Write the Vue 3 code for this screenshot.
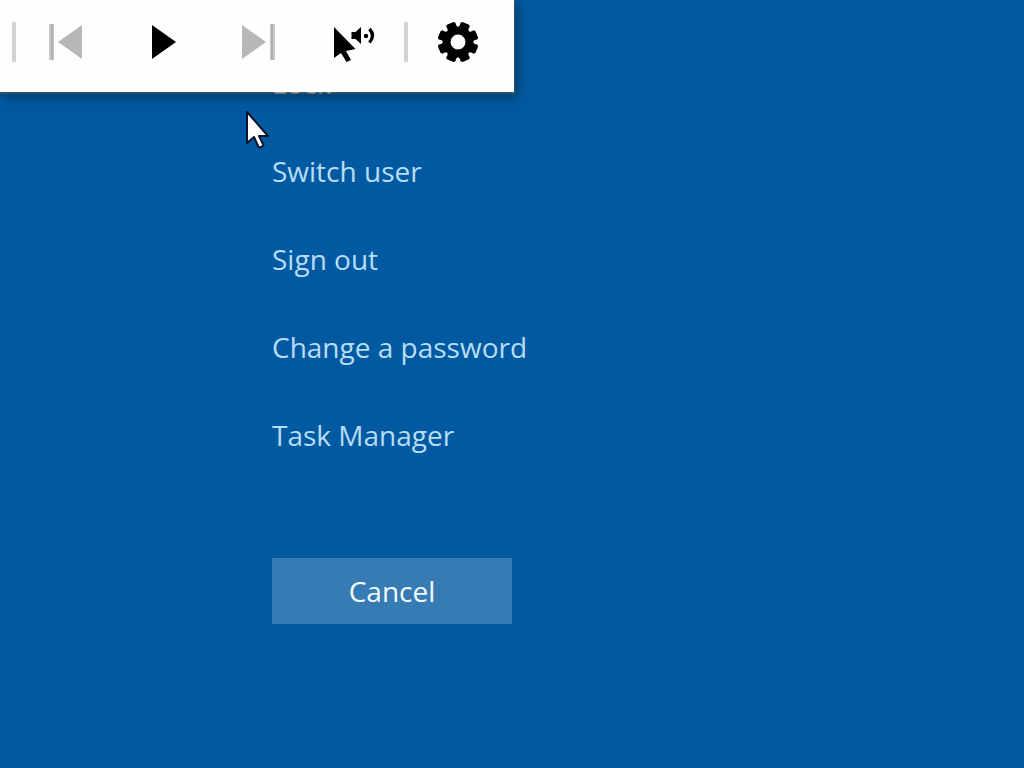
<script setup>
const options = ['Lock', 'Switch user', 'Sign out', 'Change a password', 'Task Manager']

const point = (radius, degrees) => {
  const a = (degrees * Math.PI) / 180
  return `${(458 + radius * Math.cos(a)).toFixed(2)} ${(42 + radius * Math.sin(a)).toFixed(2)}`
}
const corners = []
for (let i = 0; i < 8; i++) {
  const c = 22.5 + i * 45
  for (const [radius, offset] of [[15.5, -19], [17, -16], [19.5, -15], [20.6, -10], [20.6, 10], [19.5, 15], [17, 16], [15.5, 19]]) {
    corners.push(point(radius, c + offset))
  }
}
const gear = `M${corners.join('L')}Z M465.5 42a7.5 7.5 0 1 0-15 0a7.5 7.5 0 1 0 15 0Z`
</script>

<template>
  <div class="screen">
    <main class="menu">
      <button v-for="option in options" :key="option" type="button" class="option">{{ option }}</button>
      <button type="button" class="cancel">Cancel</button>
    </main>

    <div class="toolbar" role="toolbar" aria-label="Narration controls">
      <span class="divider"></span>
      <button type="button" class="tool" aria-label="Previous" disabled>
        <svg viewBox="16 0 97 92">
          <path d="M49 24h5v36h-5z" fill="#c8c8c8" />
          <path d="M51 24h2v36h-2z" fill="#b0b0b0" />
          <path d="M82 25v34L58 42z" fill="#b7b7b7" />
        </svg>
      </button>
      <button type="button" class="tool" aria-label="Play">
        <svg viewBox="113 0 97 92"><path d="M152 25v34l24-17z" /></svg>
      </button>
      <button type="button" class="tool" aria-label="Next" disabled>
        <svg viewBox="210 0 97 92">
          <path d="M242 25v34l24-17z" fill="#b7b7b7" />
          <path d="M270 24h5v36h-5z" fill="#c8c8c8" />
          <path d="M271 24h2v36h-2z" fill="#b0b0b0" />
        </svg>
      </button>
      <button type="button" class="tool" aria-label="Speak on hover">
        <svg viewBox="307 0 97 92">
          <path d="M334 27v31l7-5 5.500 9 4.500-2-5-9 9.500-2z" />
          <path d="M351.500 32h4l5.500-5v17l-5.500-5h-4z" />
          <circle cx="366" cy="36" r="2.200" />
          <path d="M369.500 29q6 6.500 0 13.500" fill="none" stroke="#000" stroke-width="3.400" />
        </svg>
      </button>
      <span class="divider"></span>
      <button type="button" class="tool settings" aria-label="Settings">
        <svg viewBox="408 0 106 92"><path :d="gear" fill-rule="evenodd" /></svg>
      </button>
    </div>

    <svg class="pointer" viewBox="0 0 26 40" aria-hidden="true">
      <path d="M2 2v31l7-6 4.500 10q3 1 5-2l-4.500-9H23z" fill="#fff" stroke="#07152b" stroke-width="2" stroke-linejoin="round" />
    </svg>
  </div>
</template>

<style>
body {
  margin: 0;
  background: #005aa1;
}
</style>

<style scoped>
.screen {
  position: relative;
  min-height: 100vh;
  box-sizing: border-box;
  overflow: hidden;
  background: #005aa1;
  font-family: "Open Sans", "Noto Sans", sans-serif;
}
.menu {
  display: flex;
  flex-direction: column;
  align-items: flex-start;
  gap: 48px;
  padding: 63px 32px 32px 272px;
}
button {
  border: 0;
  padding: 0;
  background: none;
  font-family: inherit;
}
.option {
  color: #b9dcf5;
  font-size: 28px;
  line-height: 40px;
  text-align: left;
}
.cancel {
  min-width: 240px;
  margin-top: 55px;
  padding: 13px 24px;
  background: #367bb3;
  color: #f2fbff;
  font-size: 28px;
  line-height: 40px;
}
.toolbar {
  position: absolute;
  top: 0;
  left: 0;
  display: flex;
  align-items: center;
  padding-left: 12px;
  background: #fefefe;
  background-clip: padding-box;
  border-right: 1px solid rgba(90, 86, 70, 0.5);
  border-bottom: 2px solid rgba(90, 86, 70, 0.5);
  box-shadow: 2px 3px 12px rgba(0, 25, 40, 0.5);
}
.divider {
  width: 4px;
  height: 40px;
  margin-bottom: 8px;
  background: #d2d2d2;
}
.tool {
  width: 97px;
  height: 92px;
}
.settings {
  width: 106px;
}
.tool svg {
  display: block;
  width: 100%;
  height: 100%;
}
.pointer {
  position: absolute;
  left: 245px;
  top: 110px;
  width: 26px;
  height: 40px;
}
</style>
